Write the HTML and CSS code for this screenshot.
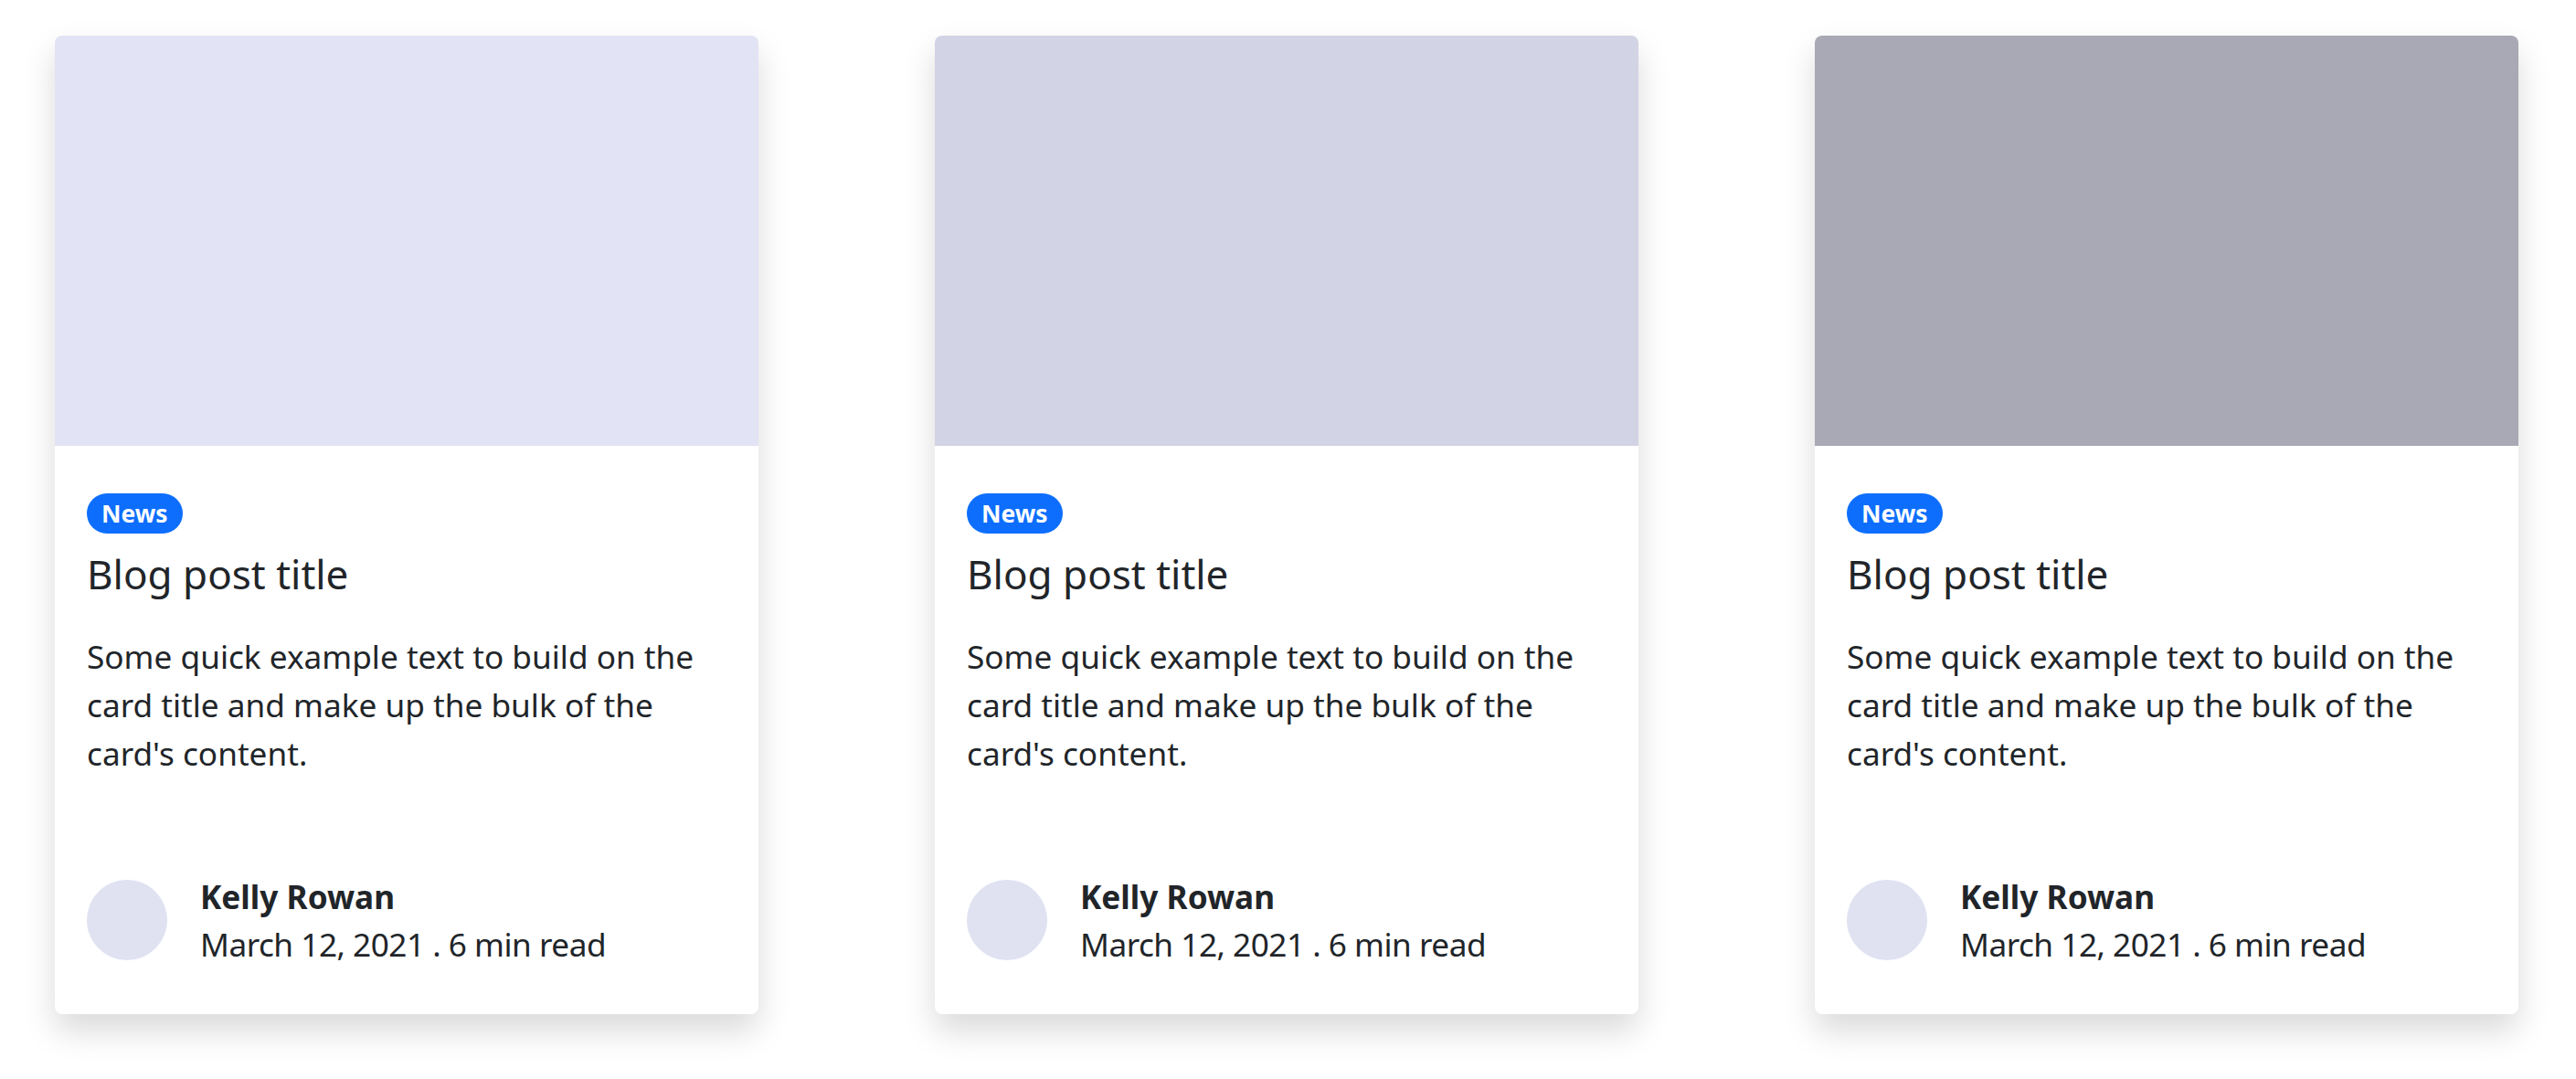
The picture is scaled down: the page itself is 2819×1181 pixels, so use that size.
FILE: index.html
```html
<!DOCTYPE html>
<html lang="en">
<head>
    <meta charset="UTF-8">
    <meta name="viewport" content="width=device-width, initial-scale=1.0">
    <title>Blog cards</title>
    <link rel="stylesheet" href="styles.css">
</head>
<body>
    <div class="cards">
        <div class="card">
            <div class="card-img img-1"></div>
            <div class="card-body">
                <span class="badge">News</span>
                <h5 class="card-title">Blog post title</h5>
                <p class="card-text">Some quick example text to build on the card title and make up the bulk of the card's content.</p>
                <div class="author">
                    <div class="avatar"></div>
                    <div class="author-info">
                        <div class="author-name">Kelly Rowan</div>
                        <div class="author-meta">March 12, 2021 . 6 min read</div>
                    </div>
                </div>
            </div>
        </div>

        <div class="card">
            <div class="card-img img-2"></div>
            <div class="card-body">
                <span class="badge">News</span>
                <h5 class="card-title">Blog post title</h5>
                <p class="card-text">Some quick example text to build on the card title and make up the bulk of the card's content.</p>
                <div class="author">
                    <div class="avatar"></div>
                    <div class="author-info">
                        <div class="author-name">Kelly Rowan</div>
                        <div class="author-meta">March 12, 2021 . 6 min read</div>
                    </div>
                </div>
            </div>
        </div>

        <div class="card">
            <div class="card-img img-3"></div>
            <div class="card-body">
                <span class="badge">News</span>
                <h5 class="card-title">Blog post title</h5>
                <p class="card-text">Some quick example text to build on the card title and make up the bulk of the card's content.</p>
                <div class="author">
                    <div class="avatar"></div>
                    <div class="author-info">
                        <div class="author-name">Kelly Rowan</div>
                        <div class="author-meta">March 12, 2021 . 6 min read</div>
                    </div>
                </div>
            </div>
        </div>
    </div>
</body>
</html>
```

FILE: styles.css
```css
* {
    margin: 0;
    padding: 0;
    box-sizing: border-box;
}

html,
body {
    min-height: 100%;
}

body {
    background: #fff;
    color: #212529;
    font-family: "Noto Sans", "Open Sans", sans-serif;
    font-size: 35.2px;
    line-height: 1.5;
}

.cards {
    display: flex;
    gap: 193px;
    padding: 39px 0 71px 60px;
}

.card {
    width: 770px;
    height: 1071px;
    flex-shrink: 0;
    background: #fff;
    border-radius: 8px;
    box-shadow: 0 17.6px 35.2px rgba(0, 0, 0, 0.15);
    overflow: hidden;
    display: flex;
    flex-direction: column;
}

.card-img {
    height: 449px;
    flex-shrink: 0;
}

.img-1 {
    background: #e2e3f4;
}

.img-2 {
    background: #d2d3e4;
}

.img-3 {
    background: #a8a9b4;
}

.card-body {
    flex: 1;
    display: flex;
    flex-direction: column;
    align-items: flex-start;
    padding: 52px 35px 50px;
}

.badge {
    display: inline-block;
    background: #0d6efd;
    color: #fff;
    font-size: 26.4px;
    font-weight: 700;
    line-height: 1;
    padding: 9px 16px;
    border-radius: 50px;
    margin-bottom: 18px;
}

.card-title {
    font-size: 44px;
    font-weight: 400;
    line-height: 1.2;
    margin-bottom: 37px;
}

.card-text {
    margin-bottom: 104px;
}

.author {
    display: flex;
    align-items: center;
    gap: 36px;
}

.avatar {
    width: 88px;
    height: 88px;
    flex-shrink: 0;
    border-radius: 50%;
    background: #e0e2f2;
}

.author-name {
    font-weight: 700;
}

.author-meta {
    letter-spacing: -0.5px;
}
```
